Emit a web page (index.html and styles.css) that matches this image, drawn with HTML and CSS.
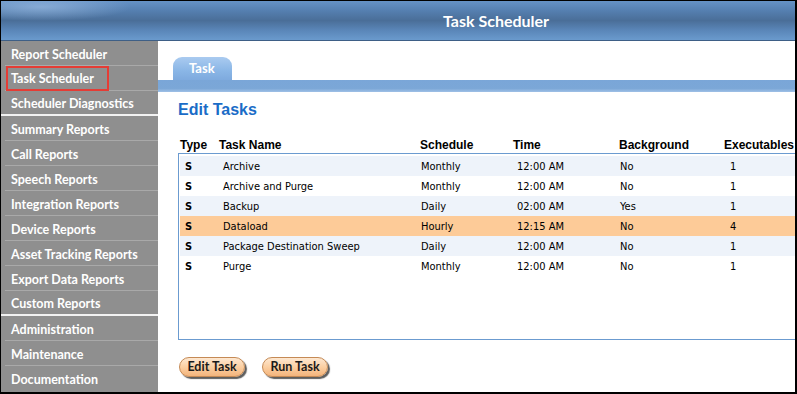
FILE: index.html
```html
<!DOCTYPE html>
<html>
<head>
<meta charset="utf-8">
<link rel="stylesheet" href="styles.css">
</head>
<body>
<div class="frame">
  <header class="topbar"><h1 class="title">Task Scheduler</h1></header>
  <div class="main">
    <nav class="sidebar">
      <div class="nav-item">Report Scheduler</div>
      <div class="nav-item"><span class="marked">Task Scheduler</span></div>
      <div class="nav-item group-end">Scheduler Diagnostics</div>
      <div class="nav-item">Summary Reports</div>
      <div class="nav-item">Call Reports</div>
      <div class="nav-item">Speech Reports</div>
      <div class="nav-item">Integration Reports</div>
      <div class="nav-item">Device Reports</div>
      <div class="nav-item">Asset Tracking Reports</div>
      <div class="nav-item">Export Data Reports</div>
      <div class="nav-item group-end">Custom Reports</div>
      <div class="nav-item">Administration</div>
      <div class="nav-item">Maintenance</div>
      <div class="nav-item last">Documentation</div>
    </nav>
    <section class="content">
      <div class="tabs"><div class="tab">Task</div></div>
      <div class="band"></div>
      <div class="panel">
        <h2 class="heading">Edit Tasks</h2>
        <div class="thead">
          <span>Type</span><span>Task Name</span><span>Schedule</span><span>Time</span><span>Background</span><span>Executables</span>
        </div>
        <div class="tbox">
          <div class="row alt"><b>S</b><span>Archive</span><span>Monthly</span><span>12:00 AM</span><span>No</span><span>1</span></div>
          <div class="row"><b>S</b><span>Archive and Purge</span><span>Monthly</span><span>12:00 AM</span><span>No</span><span>1</span></div>
          <div class="row alt"><b>S</b><span>Backup</span><span>Daily</span><span>02:00 AM</span><span>Yes</span><span>1</span></div>
          <div class="row selected"><b>S</b><span>Dataload</span><span>Hourly</span><span>12:15 AM</span><span>No</span><span>4</span></div>
          <div class="row alt"><b>S</b><span>Package Destination Sweep</span><span>Daily</span><span>12:00 AM</span><span>No</span><span>1</span></div>
          <div class="row"><b>S</b><span>Purge</span><span>Monthly</span><span>12:00 AM</span><span>No</span><span>1</span></div>
        </div>
        <div class="actions">
          <button class="btn">Edit Task</button>
          <button class="btn">Run Task</button>
        </div>
      </div>
    </section>
  </div>
</div>
</body>
</html>
```

FILE: styles.css
```css
* { box-sizing: border-box; }
html, body { margin: 0; padding: 0; background: #fff; }
.frame {
  width: 797px;
  height: 394px;
  border-style: solid;
  border-color: #000;
  border-width: 1px 2px 2px 1px;
  display: flex;
  flex-direction: column;
  overflow: hidden;
}
.topbar {
  height: 40px;
  flex: none;
  border-bottom: 1px solid #3e5f86;
  background:
    radial-gradient(ellipse 90px 14px at 40px 6px, rgba(170,200,235,0.55), rgba(170,200,235,0) 100%),
    linear-gradient(to bottom, #6592c6 0%, #557fb0 25%, #4a6e98 50%, #5a86b8 75%, #6a9acd 100%);
  display: flex;
  align-items: center;
  padding-left: 442px;
}
.title {
  margin: 0;
  font: bold 16px/20px Lato, "Liberation Sans", sans-serif;
  color: #fff;
}
.main {
  flex: 1;
  display: flex;
  min-height: 0;
}
.sidebar {
  width: 157px;
  flex: none;
  background: #8f8f8f;
  display: flex;
  flex-direction: column;
}
.nav-item {
  height: 25px;
  flex: none;
  display: flex;
  align-items: center;
  padding-top: 3px;
  font: bold 12.5px/16px Lato, "Liberation Sans", sans-serif;
  color: #fff;
  border-bottom: 1px solid #a9a9a9;
  margin-left: 4px;
  padding-left: 6px;
}
.nav-item.group-end {
  border-bottom: 2px solid #f2f2f2;
  margin-left: 0;
  padding-left: 10px;
}
.nav-item.last { border-bottom: none; }
.marked {
  display: inline-block;
  border: 2px solid #e53c35;
  margin-left: -5px;
  margin-top: -2px;
  padding: 2px 13px 2px 3px;
  line-height: 17px;
}
.content {
  flex: 1;
  min-width: 0;
  display: flex;
  flex-direction: column;
  overflow: hidden;
}
.tabs {
  height: 39px;
  flex: none;
  padding: 16px 0 0 15px;
  display: flex;
}
.tab {
  width: 59px;
  height: 23px;
  border-radius: 9px 9px 0 0;
  background: linear-gradient(to bottom, #aacbf0 0%, #8ab6e6 60%, #7eaade 100%);
  color: #fff;
  font: bold 13px/23px Lato, "Liberation Sans", sans-serif;
  padding-left: 16px;
}
.band {
  height: 12px;
  flex: none;
  background: linear-gradient(to bottom, #7aa6d8 0%, #7ba7d7 70%, #9fc0e6 100%);
}
.panel {
  padding: 9px 0 0 20px;
}
.heading {
  margin: 0;
  font: bold 16px/18px "Liberation Sans", Arial, sans-serif;
  color: #1a6cc7;
}
.thead {
  margin-top: 19px;
  height: 14px;
  display: grid;
  grid-template-columns: 39px 201px 93px 106px 105px 1fr;
  padding-left: 2px;
  font: bold 12px/14px "Liberation Sans", Arial, sans-serif;
  color: #000;
  white-space: nowrap;
}
.tbox {
  margin-top: 1px;
  width: 660px;
  height: 187px;
  border: 1px solid #6b9bd0;
  border-right: none;
  padding: 2px 0 0 1px;
}
.row {
  height: 20px;
  display: grid;
  grid-template-columns: 38px 198px 96px 103px 110px 1fr;
  align-items: center;
  padding-left: 5px;
  font: 11px/13px "DejaVu Sans", Verdana, sans-serif;
  font-stretch: condensed;
  color: #000;
  white-space: nowrap;
}
.row b { font-weight: bold; }
.row.alt { background: #eef3fa; }
.row.selected { background: #fdcb98; }
.actions {
  margin-top: 17px;
  display: flex;
  gap: 17px;
  padding-left: 1px;
}
.btn {
  width: 66px;
  height: 20px;
  padding: 0 0 1px 0;
  border: 1px solid #c58a55;
  border-radius: 10px;
  background: linear-gradient(to bottom, #fde8d2 0%, #fbcfa2 50%, #f3b47c 100%);
  box-shadow: 2px 2px 1px rgba(40,40,40,0.75);
  font: bold 12.5px/16px Lato, "Liberation Sans", sans-serif;
  color: #1a1a1a;
}
```
